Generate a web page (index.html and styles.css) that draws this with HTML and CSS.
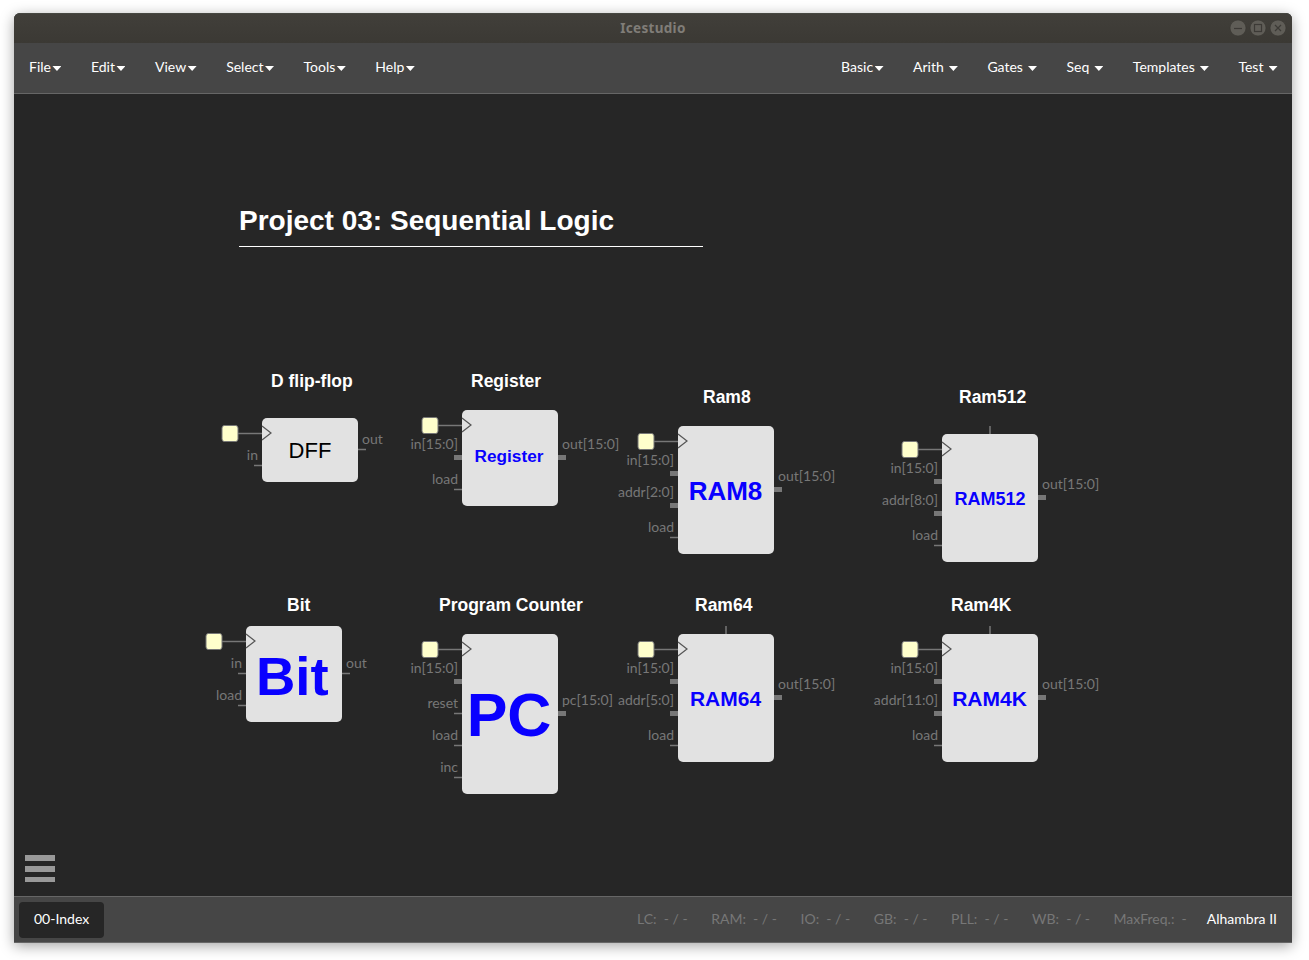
FILE: index.html
```html
<!DOCTYPE html>
<html lang="en">
<head>
<meta charset="utf-8">
<title>Icestudio</title>
<link rel="stylesheet" href="styles.css">
</head>
<body>
<div class="window">
  <header class="titlebar">
    <span class="title">Icestudio</span>
    <svg class="controls" width="60" height="20" viewBox="0 0 60 20">
      <g class="knob"><circle cx="10" cy="10" r="8"/><circle cx="30" cy="10" r="8"/><circle cx="50" cy="10" r="8"/></g>
      <g class="glyph"><path d="M6 10.5h8"/><rect x="26.5" y="6.5" width="7" height="7"/><path d="M47 7l6 6M53 7l-6 6"/></g>
    </svg>
  </header>
  <nav class="navbar">
    <div class="menu">
      <a class="item">File<b class="caret"></b></a><a class="item">Edit<b class="caret"></b></a><a class="item">View<b class="caret"></b></a><a class="item">Select<b class="caret"></b></a><a class="item">Tools<b class="caret"></b></a><a class="item">Help<b class="caret"></b></a>
    </div>
    <div class="menu">
      <a class="item">Basic<b class="caret"></b></a><a class="item">Arith&nbsp;<b class="caret"></b></a><a class="item">Gates&nbsp;<b class="caret"></b></a><a class="item">Seq&nbsp;<b class="caret"></b></a><a class="item">Templates&nbsp;<b class="caret"></b></a><a class="item">Test&nbsp;<b class="caret"></b></a>
    </div>
  </nav>
  <main class="canvas">
    <svg class="design" width="1278" height="802" viewBox="14 94 1278 802">
      <defs>
        <g id="clock">
          <path class="wire" d="M-24 15.5H0"/>
          <rect class="driver" x="-40" y="7.5" width="16" height="16" rx="2.5"/>
          <path class="edge" d="M0 8L9 15L0 22"/>
        </g>
      </defs>

      <text class="heading" x="239" y="230">Project 03: Sequential Logic</text>
      <path class="rule" d="M239 246.5H703"/>

      <text class="label" x="271" y="387">D flip-flop</text>
      <g transform="translate(262 418)">
        <rect class="block" width="96" height="64" rx="5"/>
        <use href="#clock"/>
        <path class="wire" d="M-8 47.5H0M96 31.5H104"/>
        <text class="port in" x="-4" y="42">in</text>
        <text class="port" x="100" y="26">out</text>
        <text class="name plain" x="48" y="40" font-size="22">DFF</text>
      </g>

      <text class="label" x="471" y="387">Register</text>
      <g transform="translate(462 410)">
        <rect class="block" width="96" height="96" rx="5"/>
        <use href="#clock"/>
        <path class="bus" d="M-8 47.5H0M96 47.5H104"/>
        <path class="wire" d="M-8 79.5H0"/>
        <text class="port in" x="-4" y="39">in[15:0]</text>
        <text class="port in" x="-4" y="74">load</text>
        <text class="port" x="100" y="39">out[15:0]</text>
        <text class="name" x="47" y="52" font-size="17.2">Register</text>
      </g>

      <text class="label" x="703" y="403">Ram8</text>
      <g transform="translate(678 426)">
        <rect class="block" width="96" height="128" rx="5"/>
        <use href="#clock"/>
        <path class="bus" d="M-8 47.5H0M-8 79.5H0M96 63.5H104"/>
        <path class="wire" d="M-8 111.5H0"/>
        <text class="port in" x="-4" y="39">in[15:0]</text>
        <text class="port in" x="-4" y="71">addr[2:0]</text>
        <text class="port in" x="-4" y="106">load</text>
        <text class="port" x="100" y="55">out[15:0]</text>
        <text class="name" x="47.5" y="74" font-size="26">RAM8</text>
      </g>

      <text class="label" x="959" y="403">Ram512</text>
      <g transform="translate(942 434)">
        <rect class="block" width="96" height="128" rx="5"/>
        <use href="#clock"/>
        <path class="bus" d="M-8 47.5H0M-8 79.5H0M96 63.5H104"/>
        <path class="wire" d="M-8 111.5H0M48 -8V0"/>
        <text class="port in" x="-4" y="39">in[15:0]</text>
        <text class="port in" x="-4" y="71">addr[8:0]</text>
        <text class="port in" x="-4" y="106">load</text>
        <text class="port" x="100" y="55">out[15:0]</text>
        <text class="name" x="48" y="71" font-size="18">RAM512</text>
      </g>

      <text class="label" x="287" y="611">Bit</text>
      <g transform="translate(246 626)">
        <rect class="block" width="96" height="96" rx="5"/>
        <use href="#clock"/>
        <path class="wire" d="M-8 47.5H0M-8 79.5H0M96 47.5H104"/>
        <text class="port in" x="-4" y="42">in</text>
        <text class="port in" x="-4" y="74">load</text>
        <text class="port" x="100" y="42">out</text>
        <text class="name" x="46.3" y="69" font-size="54.5">Bit</text>
      </g>

      <text class="label" x="439" y="611">Program Counter</text>
      <g transform="translate(462 634)">
        <rect class="block" width="96" height="160" rx="5"/>
        <use href="#clock"/>
        <path class="bus" d="M-8 47.5H0M96 79.5H104"/>
        <path class="wire" d="M-8 79.5H0M-8 111.5H0M-8 143.5H0"/>
        <text class="port in" x="-4" y="39">in[15:0]</text>
        <text class="port in" x="-4" y="74">reset</text>
        <text class="port in" x="-4" y="106">load</text>
        <text class="port in" x="-4" y="138">inc</text>
        <text class="port" x="100" y="71">pc[15:0]</text>
        <text class="name" x="47" y="102" font-size="61">PC</text>
      </g>

      <text class="label" x="695" y="611">Ram64</text>
      <g transform="translate(678 634)">
        <rect class="block" width="96" height="128" rx="5"/>
        <use href="#clock"/>
        <path class="bus" d="M-8 47.5H0M-8 79.5H0M96 63.5H104"/>
        <path class="wire" d="M-8 111.5H0M48 -8V0"/>
        <text class="port in" x="-4" y="39">in[15:0]</text>
        <text class="port in" x="-4" y="71">addr[5:0]</text>
        <text class="port in" x="-4" y="106">load</text>
        <text class="port" x="100" y="55">out[15:0]</text>
        <text class="name" x="47.5" y="72" font-size="21">RAM64</text>
      </g>

      <text class="label" x="951" y="611">Ram4K</text>
      <g transform="translate(942 634)">
        <rect class="block" width="96" height="128" rx="5"/>
        <use href="#clock"/>
        <path class="bus" d="M-8 47.5H0M-8 79.5H0M96 63.5H104"/>
        <path class="wire" d="M-8 111.5H0M48 -8V0"/>
        <text class="port in" x="-4" y="39">in[15:0]</text>
        <text class="port in" x="-4" y="71">addr[11:0]</text>
        <text class="port in" x="-4" y="106">load</text>
        <text class="port" x="100" y="55">out[15:0]</text>
        <text class="name" x="47.5" y="72" font-size="21">RAM4K</text>
      </g>

      <path class="burger" d="M25 855h30v6H25zM25 866h30v6H25zM25 877h30v5H25z"/>
    </svg>
  </main>
  <footer class="statusbar">
    <span class="tab">00-Index</span>
    <div class="stats">
      <span>LC:&nbsp; - / -</span><span>RAM:&nbsp; - / -</span><span>IO:&nbsp; - / -</span><span>GB:&nbsp; - / -</span><span>PLL:&nbsp; - / -</span><span>WB:&nbsp; - / -</span><span>MaxFreq.:&nbsp; -</span>
    </div>
    <span class="board">Alhambra II</span>
  </footer>
</div>
</body>
</html>
```
FILE: styles.css
```css
* { box-sizing: border-box; }
body {
  margin: 0;
  height: 960px;
  padding: 13px 17px 17px 14px;
  background: #fff;
  overflow: hidden;
  font: 14px/20px Lato, sans-serif;
}
.window {
  display: flex;
  flex-direction: column;
  width: 1278px;
  height: 930px;
  border-radius: 6px 6px 0 0;
  background: #262626;
  box-shadow: 0 3px 14px rgba(0, 0, 0, 0.36);
}
.titlebar {
  display: grid;
  grid-template-columns: 1fr auto 1fr;
  align-items: center;
  height: 30px;
  padding: 0 4px 2px;
  border-radius: 6px 6px 0 0;
  border-top: 1px solid #474842;
  background: linear-gradient(#413f3a, #3b3934);
}
.title {
  grid-column: 2;
  color: #807d78;
  font: bold 13.5px/20px "Noto Sans", sans-serif;
  letter-spacing: 0.3px;
}
.controls { justify-self: end; }
.knob { fill: #5f5d57; stroke: #383631; stroke-width: 0.6; }
.glyph { fill: none; stroke: #3c3a36; stroke-width: 1.2; }
.navbar {
  display: flex;
  justify-content: space-between;
  height: 51px;
  background: #464646;
  border-bottom: 1px solid #666;
}
.menu { display: flex; }
.item { padding: 14px 15px; color: #fff; white-space: nowrap; }
.caret {
  display: inline-block;
  width: 9px;
  height: 5px;
  margin: 0 -0.5px 0 1.5px;
  vertical-align: middle;
  background: #fff;
  clip-path: polygon(0 0, 100% 0, 50% 100%);
}
.canvas { height: 802px; }
.design { display: block; }
.heading, .label, .name { font-family: "Liberation Sans", Arial, sans-serif; font-weight: bold; }
.heading { font-size: 28px; fill: #fff; }
.label { font-size: 17.5px; fill: #fff; }
.name { fill: #0900ff; text-anchor: middle; }
.plain { fill: #000; font-weight: normal; }
.port { font-size: 14px; fill: #777; }
.in { text-anchor: end; }
.rule { stroke: #fff; }
.block { fill: #e2e2e2; }
.wire { fill: none; stroke: #777; stroke-width: 1.5; }
.bus { stroke: #777; stroke-width: 5; }
.driver { fill: #ffc; stroke: #777; }
.edge { fill: none; stroke: #555; stroke-width: 1.2; }
.burger { fill: #999; }
.statusbar {
  display: flex;
  align-items: center;
  height: 47px;
  padding: 0 15px 0 5px;
  background: #464646;
  border-top: 1px solid #666;
  border-bottom: 1px solid #666;
}
.tab {
  height: 36px;
  padding: 7px 15px 9px;
  border-radius: 4px;
  background: #262626;
  color: #fff;
}
.stats { display: flex; gap: 23.5px; margin-left: auto; color: #777; }
.board { margin-left: 20px; color: #fff; }
.stats, .board { padding-bottom: 2px; }
```
